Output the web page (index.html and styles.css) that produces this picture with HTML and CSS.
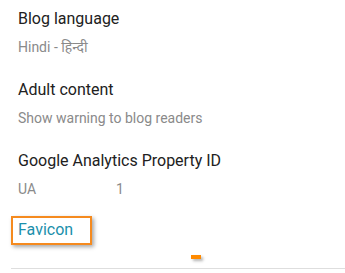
FILE: index.html
```html
<!DOCTYPE html>
<html lang="en">
<head>
  <meta charset="UTF-8">
  <meta name="viewport" content="width=device-width, initial-scale=1.0">
  <title>Blog settings</title>
  <link rel="stylesheet" href="styles.css">
</head>
<body>

  <div class="settings">
    <div class="setting">
      <div class="setting-title">Blog language</div>
      <div class="setting-value">Hindi - हिन्दी</div>
    </div>

    <div class="setting">
      <div class="setting-title">Adult content</div>
      <div class="setting-value">Show warning to blog readers</div>
    </div>

    <div class="setting">
      <div class="setting-title">Google Analytics Property ID</div>
      <div class="setting-value ga-id">
        <span class="ga-prefix">UA</span>
        <span>1</span>
      </div>
    </div>

    <!-- highlighted favicon row -->
    <div class="setting favicon">
      <span class="highlight">
        <span class="favicon-link">Favicon</span>
      </span>
      <span class="marker"></span>
    </div>
  </div>

</body>
</html>
```

FILE: styles.css
```css
body {
  font-family: Roboto, 'Noto Sans', sans-serif;
  background: #ffffff;
  margin: 0;
  padding: 0;
  overflow: hidden;
}

.settings {
  display: flex;
  flex-direction: column;
  padding: 9px 0 0 18px;
}

.setting {
  display: flex;
  flex-direction: column;
  gap: 10px;
  margin-bottom: 24px;
}

.setting-title {
  font-size: 16px;
  line-height: 20px;
  color: #212121;
}

.setting-value {
  font-size: 14px;
  line-height: 17px;
  color: #8a8a8a;
}

.ga-id {
  display: flex;
}

.ga-prefix {
  width: 98px;
}

.favicon {
  position: relative;
  margin: -6px 0 0 -7px;
  height: 52px;
  border-bottom: 1px solid #dedede;
}

.highlight {
  display: inline-block;
  width: 72px;
  padding: 2px 0 3px 5px;
  border: 2px solid #f58a1e;
  box-shadow: 2px 2px 4px rgba(0, 0, 0, 0.35);
  align-self: flex-start;
}

.favicon-link {
  font-size: 16px;
  line-height: 20px;
  color: #1b8fab;
}

.marker {
  position: absolute;
  left: 180px;
  top: 39px;
  width: 10px;
  height: 4px;
  background: #ff8a00;
  box-shadow: 2px 2px 3px rgba(0, 0, 0, 0.3);
}
```
